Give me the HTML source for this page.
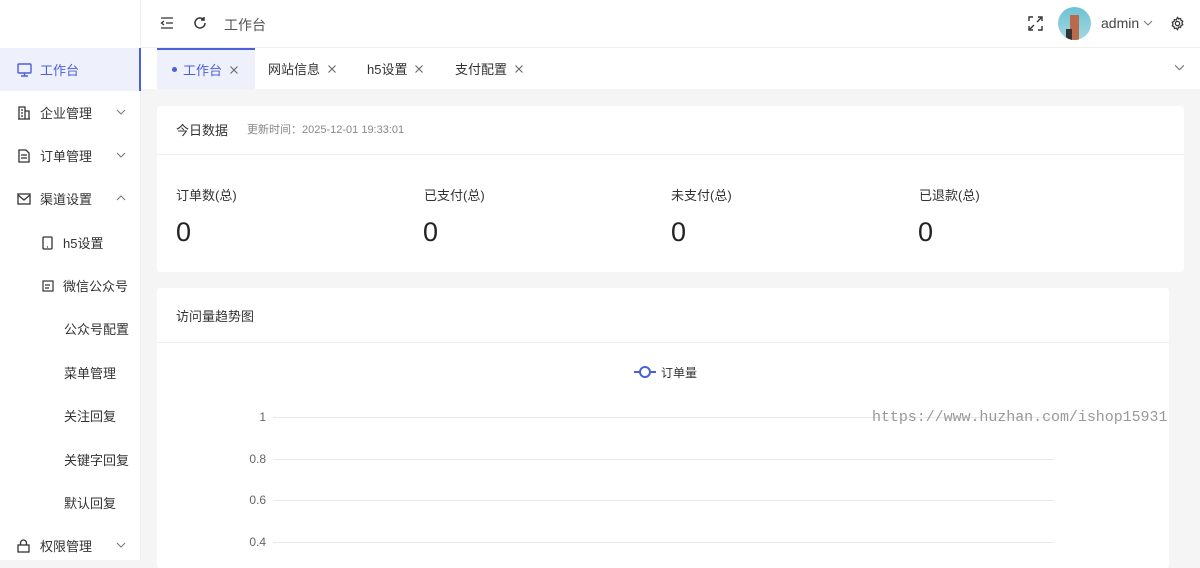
<!DOCTYPE html><html><head><meta charset="utf-8"><style>
*{margin:0;padding:0;box-sizing:border-box}
body{width:1200px;height:560px;overflow:hidden;background:#f5f5f5;font-family:"Liberation Sans","Noto Sans CJK SC",sans-serif;color:#333;position:relative}
.abs{position:absolute}
.side{left:0;top:0;width:141px;height:560px;background:#fff;border-right:1px solid #eee}
.it{position:absolute;left:0;width:141px;height:43px;font-size:13px;color:#333;display:flex;align-items:center}
.it svg{position:absolute}
.chev{position:absolute;left:116px;top:18px}
.hdr{left:141px;top:0;width:1059px;height:48px;background:#fff;border-bottom:1px solid #eee}
.tabs{left:141px;top:48px;width:1059px;height:41px;background:#fff}
.tab{position:absolute;top:0;height:41px;font-size:13px;display:flex;align-items:center;color:#333}
.x{margin-left:7px}
.card{background:#fff;border-radius:3px}
.lbl{font-size:13px;color:#333}
.num{font-size:27px;color:#222}
.gl{position:absolute;left:273px;width:781px;height:1px;background:#e6e8ef}
.yl{position:absolute;font-size:12px;color:#666;width:40px;text-align:right;left:226px}
</style></head><body>
<svg width="0" height="0" style="position:absolute"><defs>
<symbol id="dn" viewBox="0 0 10 6"><path d="M1 1l4 4 4-4" fill="none" stroke="#777" stroke-width="1"/></symbol>
<symbol id="up" viewBox="0 0 10 6"><path d="M1 5l4-4 4 4" fill="none" stroke="#777" stroke-width="1"/></symbol>
<symbol id="cx" viewBox="0 0 10 10"><path d="M1.5 1.5l7 7M8.5 1.5l-7 7" fill="none" stroke="currentColor" stroke-width="1.1"/></symbol>
</defs></svg>
<div class="abs side">
 <div class="it" style="top:48px;background:#eef0fc;color:#4a5fd8;border-right:2px solid #4a5fd8"><svg style="left:17px" width="15" height="14" viewBox="0 0 15 14" fill="none" stroke="#4a5fd8" stroke-width="1.4"><rect x="1" y="1" width="13" height="9" rx="1"/><path d="M7.5 10v3M4 13h7"/></svg><span style="margin-left:40px">工作台</span></div>
 <div class="it" style="top:91px"><svg style="left:17px" width="14" height="14" viewBox="0 0 14 14" fill="none" stroke="#333" stroke-width="1.3"><path d="M1 13h12M2 13V1h6v12M8 5h4v8M4 4h2M4 7h2M4 10h2"/></svg><span style="margin-left:40px">企业管理</span><svg class="chev" width="10" height="6"><use href="#dn"/></svg></div>
 <div class="it" style="top:134px"><svg style="left:17px" width="14" height="14" viewBox="0 0 14 14" fill="none" stroke="#333" stroke-width="1.3"><path d="M2 1h7l3 3v9H2zM4 6h6M4 9h6"/></svg><span style="margin-left:40px">订单管理</span><svg class="chev" width="10" height="6"><use href="#dn"/></svg></div>
 <div class="it" style="top:177px"><svg style="left:17px" width="14" height="12" viewBox="0 0 14 12" fill="none" stroke="#333" stroke-width="1.3"><rect x="1" y="1" width="12" height="10"/><path d="M1 2l6 5 6-5"/></svg><span style="margin-left:40px">渠道设置</span><svg class="chev" width="10" height="6"><use href="#up"/></svg></div>
 <div class="it" style="top:221px"><svg style="left:42px" width="11" height="14" viewBox="0 0 11 14" fill="none" stroke="#333" stroke-width="1.3"><rect x="1" y="1" width="9" height="12" rx="1"/><path d="M5 11h1"/></svg><span style="margin-left:63px">h5设置</span></div>
 <div class="it" style="top:264px"><svg style="left:42px" width="12" height="12" viewBox="0 0 12 12" fill="none" stroke="#333" stroke-width="1.2"><rect x="1" y="1" width="10" height="10"/><path d="M3 5h5M3 8h4"/></svg><span style="margin-left:63px">微信公众号</span></div>
 <div class="it" style="top:307px"><span style="margin-left:64px">公众号配置</span></div>
 <div class="it" style="top:351px"><span style="margin-left:64px">菜单管理</span></div>
 <div class="it" style="top:394px"><span style="margin-left:64px">关注回复</span></div>
 <div class="it" style="top:438px"><span style="margin-left:64px">关键字回复</span></div>
 <div class="it" style="top:481px"><span style="margin-left:64px">默认回复</span></div>
 <div class="it" style="top:524px"><svg style="left:17px" width="13" height="14" viewBox="0 0 13 14" fill="none" stroke="#333" stroke-width="1.3"><rect x="1" y="6" width="11" height="7"/><path d="M3.5 6V4a3 3 0 016 0v2"/></svg><span style="margin-left:40px">权限管理</span><svg class="chev" width="10" height="6"><use href="#dn"/></svg></div>
</div>
<div class="abs hdr">
 <svg class="abs" style="left:19px;top:17px" width="14" height="12" viewBox="0 0 14 12" fill="none" stroke="#333" stroke-width="1.3"><path d="M1 1h12M6 6h7M1 11h12M4 4L1.5 6 4 8"/></svg>
 <svg class="abs" style="left:52px;top:16px" width="14" height="14" viewBox="0 0 14 14" fill="none" stroke="#333" stroke-width="1.5"><path d="M12 7a5 5 0 11-1.5-3.6M11 1v3h-3"/></svg>
 <span class="abs" style="left:83px;top:15px;font-size:14px;color:#555">工作台</span>
 <svg class="abs" style="left:887px;top:16px" width="15" height="15" viewBox="0 0 15 15" fill="none" stroke="#333" stroke-width="1.4"><path d="M1 5V1h4M10 1h4v4M14 10v4h-4M5 14H1v-4M2 13l4-4M13 2L9 6"/></svg>
 <div class="abs" style="left:917px;top:7px;width:33px;height:33px;border-radius:50%;background:linear-gradient(#6cc2d4,#a4d8e0);overflow:hidden"><div class="abs" style="left:12px;top:8px;width:9px;height:25px;background:#b86a4a"></div><div class="abs" style="left:8px;top:22px;width:6px;height:11px;background:#333"></div></div>
 <span class="abs" style="left:960px;top:15px;font-size:14px;color:#444">admin</span>
 <svg class="abs" style="left:1002px;top:20px" width="10" height="6"><use href="#dn"/></svg>
 <svg class="abs" style="left:1029px;top:16px" width="15" height="15" viewBox="0 0 16 16" fill="none" stroke="#333" stroke-width="1.3"><circle cx="8" cy="8" r="2.3"/><path d="M8 1.5l1.3 1.6 2-.5.4 2 1.9.9-.8 1.9.8 1.9-1.9.9-.4 2-2-.5L8 14.5l-1.3-1.6-2 .5-.4-2-1.9-.9.8-1.9-.8-1.9 1.9-.9.4-2 2 .5z"/></svg>
</div>
<div class="abs tabs">
 <div class="tab" style="left:16px;width:98px;background:#eef0fc;border-top:2px solid #4a5fd8;color:#4a5fd8;padding-left:15px"><span style="width:5px;height:5px;border-radius:50%;background:#4a5fd8;margin-right:6px"></span>工作台<svg class="x" width="10" height="10" style="color:#666"><use href="#cx"/></svg></div>
 <div class="tab" style="left:127px">网站信息<svg class="x" width="10" height="10" style="color:#666"><use href="#cx"/></svg></div>
 <div class="tab" style="left:226px">h5设置<svg class="x" width="10" height="10" style="color:#666"><use href="#cx"/></svg></div>
 <div class="tab" style="left:314px">支付配置<svg class="x" width="10" height="10" style="color:#666"><use href="#cx"/></svg></div>
 <svg class="abs" style="left:1033px;top:16px" width="11" height="7"><use href="#dn"/></svg>
</div>
<div class="abs card" style="left:157px;top:106px;width:1027px;height:166px">
 <span class="abs lbl" style="left:19px;top:14px">今日数据</span>
 <span class="abs" style="left:90px;top:15px;font-size:11px;color:#888">更新时间：2025-12-01 19:33:01</span>
 <div class="abs" style="left:0;top:48px;width:100%;height:1px;background:#eee"></div>
 <span class="abs lbl" style="left:19px;top:79px">订单数(总)</span><span class="abs num" style="left:19px;top:111px">0</span>
 <span class="abs lbl" style="left:267px;top:79px">已支付(总)</span><span class="abs num" style="left:266px;top:111px">0</span>
 <span class="abs lbl" style="left:514px;top:79px">未支付(总)</span><span class="abs num" style="left:514px;top:111px">0</span>
 <span class="abs lbl" style="left:762px;top:79px">已退款(总)</span><span class="abs num" style="left:761px;top:111px">0</span>
</div>
<div class="abs card" style="left:157px;top:288px;width:1012px;height:280px">
 <span class="abs lbl" style="left:19px;top:18px">访问量趋势图</span>
 <div class="abs" style="left:0;top:54px;width:100%;height:1px;background:#eee"></div>
</div>
<svg class="abs" style="left:633px;top:364px" width="24" height="16"><path d="M1 8h22" stroke="#4a5fd8" stroke-width="2"/><circle cx="12" cy="8" r="5" fill="#fff" stroke="#4a5fd8" stroke-width="2"/></svg>
<span class="abs" style="left:661px;top:364px;font-size:12px;color:#333">订单量</span>
<div class="gl" style="top:417px"></div><div class="gl" style="top:459px"></div><div class="gl" style="top:500px"></div><div class="gl" style="top:542px"></div>
<span class="yl" style="top:410px">1</span><span class="yl" style="top:452px">0.8</span><span class="yl" style="top:493px">0.6</span><span class="yl" style="top:535px">0.4</span>
<span class="abs" style="left:872px;top:409px;font-family:'Liberation Mono',monospace;font-size:15px;color:#999;letter-spacing:-0.05px">https://www.huzhan.com/ishop15931</span>
</body></html>
